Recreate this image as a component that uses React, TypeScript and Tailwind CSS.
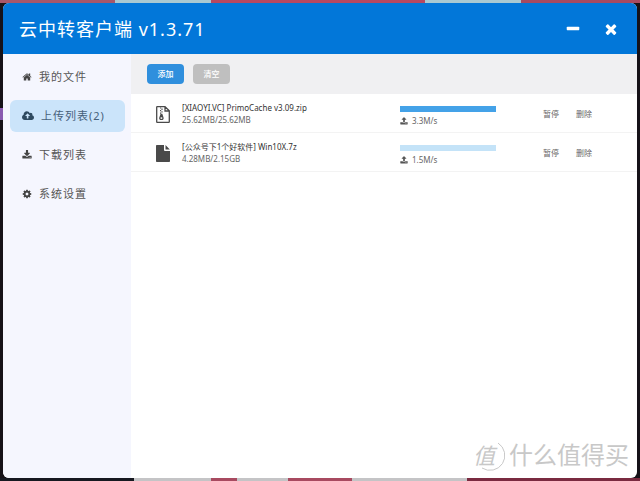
const ICONS = {
  home: 'M1472 992v480q0 26-19 45t-45 19h-384v-384h-256v384h-384q-26 0-45-19t-19-45v-480q0-1 .5-3t.5-3l575-474 575 474q1 2 1 6zm223-69l-62 74q-8 9-21 11h-3q-13 0-21-7l-692-577-692 577q-12 8-24 7-13-2-21-11l-62-74q-8-10-7-23.5t11-21.5l719-599q32-26 76-26t76 26l244 204v-195q0-14 9-23t23-9h192q14 0 23 9t9 23v408l219 182q10 8 11 21.5t-7 23.5z',
  cloud: 'M1216 864q0-14-9-23l-352-352q-9-9-23-9t-23 9l-351 351q-10 12-10 24 0 14 9 23t23 9h224v352q0 13 9.5 22.5t22.5 9.5h192q13 0 22.5-9.5t9.5-22.5v-352h224q13 0 22.5-9.5t9.5-22.5zm640 288q0 159-112.5 271.5t-271.5 112.5h-1088q-185 0-316.5-131.5t-131.5-316.5q0-130 70-240t188-165q-2-30-2-43 0-212 150-362t362-150q156 0 285.5 87t188.5 231q71-62 166-62 106 0 181 75t75 181q0 76-41 138 130 31 213.5 135.5t83.5 238.5z',
  download: 'M1344 1344q0-26-19-45t-45-19-45 19-19 45 19 45 45 19 45-19 19-45zm256 0q0-26-19-45t-45-19-45 19-19 45 19 45 45 19 45-19 19-45zm128-224v320q0 40-28 68t-68 28h-1472q-40 0-68-28t-28-68v-320q0-40 28-68t68-28h465l135 136q58 56 136 56t136-56l136-136h464q40 0 68 28t28 68zm-325-569q17 41-14 70l-448 448q-18 19-45 19t-45-19l-448-448q-31-29-14-70 17-39 59-39h256v-448q0-26 19-45t45-19h256q26 0 45 19t19 45v448h256q42 0 59 39z',
  upload: 'M1344 1472q0-26-19-45t-45-19-45 19-19 45 19 45 45 19 45-19 19-45zm256 0q0-26-19-45t-45-19-45 19-19 45 19 45 45 19 45-19 19-45zm128-224v320q0 40-28 68t-68 28h-1472q-40 0-68-28t-28-68v-320q0-40 28-68t68-28h427q21 56 70.5 92t110.5 36h256q61 0 110.5-36t70.5-92h427q40 0 68 28t28 68zm-325-648q-17 40-59 40h-256v448q0 26-19 45t-45 19h-256q-26 0-45-19t-19-45v-448h-256q-42 0-59-40-17-39 14-69l448-448q18-19 45-19t45 19l448 448q31 30 14 69z',
  cog: 'M1152 896q0-106-75-181t-181-75-181 75-75 181 75 181 181 75 181-75 75-181zm512-109v222q0 12-8 23t-20 13l-185 28q-19 54-39 91 35 50 107 138 10 12 10 25t-9 23q-27 37-99 108t-94 71q-12 0-26-9l-138-108q-44 23-91 38-16 136-29 186-7 28-36 28h-222q-14 0-24.5-8.5t-11.5-21.5l-28-184q-49-16-90-37l-141 107q-10 9-25 9-14 0-25-11-126-114-165-168-7-10-7-23 0-12 8-23 15-21 51-66.5t54-70.5q-27-50-41-99l-183-27q-13-2-21-12.5t-8-23.5v-222q0-12 8-23t19-13l186-28q14-46 39-92-40-57-107-138-10-12-10-24 0-10 9-23 26-36 98.5-107.5t94.5-71.5q13 0 26 10l138 107q44-23 91-38 16-136 29-186 7-28 36-28h222q14 0 24.5 8.5t11.5 21.5l28 184q49 16 90 37l142-107q9-9 24-9 13 0 25 10 129 119 165 170 7 8 7 22 0 12-8 23-15 21-51 66.5t-54 70.5q26 50 41 98l183 28q13 2 21 12.5t8 23.5z',
  minus: 'M1600 736v192q0 40-28 68t-68 28h-1216q-40 0-68-28t-28-68v-192q0-40 28-68t68-28h1216q40 0 68 28t28 68z',
  times: 'M1490 1322q0 40-28 68l-136 136q-28 28-68 28t-68-28l-294-294-294 294q-28 28-68 28t-68-28l-136-136q-28-28-28-68t28-68l294-294-294-294q-28-28-28-68t28-68l136-136q28-28 68-28t68 28l294 294 294-294q28-28 68-28t68 28l136 136q28 28 28 68t-28 68l-294 294 294 294q28 28 28 68z',
};

type IconName = keyof typeof ICONS;

function Icon({ name, className }: { name: IconName; className: string }) {
  return (
    <svg viewBox={name === 'cloud' ? '-64 0 1920 1792' : '0 0 1792 1792'} fill="currentColor" className={className} aria-hidden>
      <path d={ICONS[name]} />
    </svg>
  );
}

function ZipIcon() {
  return (
    <svg viewBox="0 0 14 17" fill="none" stroke="currentColor" className="h-[17px] w-3.5 text-[#4a4a4a]" aria-hidden>
      <path strokeWidth="1.3" d="M1.2.7H9l4.300 4v11q0 .6-.6.6H1.2q-.5 0-.5-.6V1.2q0-.5.5-.5zM9 .8V5h4" />
      <path strokeWidth="1.1" d="M4.6 1.4v1.2M6 2.6v1.3M4.6 3.9v1.3M6 5.2v1.3M4.6 6.5v1.3" />
      <path fill="currentColor" stroke="none" fillRule="evenodd" d="M4.6 7.800h1.700l1.300 3.900q.4 2.300-2.200 2.300t-2.200-2.300zM5.400 11.300q-1.100 0-1.100.8t1.100.8 1.100-.8-1.100-.8z" />
    </svg>
  );
}

function FileIcon() {
  return (
    <svg viewBox="0 0 14 17" fill="currentColor" className="h-[17px] w-3.5 text-[#4a4a4a]" aria-hidden>
      <path d="M.8 0H8v5q0 1 1 1h5v10.200q0 .8-.8.8H.8q-.8 0-.8-.8V.8Q0 0 .8 0zM9.500 0l4.300 4.500H9.500z" />
    </svg>
  );
}

const NAV: { label: string; icon: IconName; active?: boolean }[] = [
  { label: '我的文件', icon: 'home' },
  { label: '上传列表(2)', icon: 'cloud', active: true },
  { label: '下载列表', icon: 'download' },
  { label: '系统设置', icon: 'cog' },
];

const UPLOADS = [
  { name: '[XIAOYI.VC] PrimoCache v3.09.zip', size: '25.62MB/25.62MB', speed: '3.3M/s', zip: true },
  { name: '[公众号下1个好软件] Win10X.7z', size: '4.28MB/2.15GB', speed: '1.5M/s', zip: false },
];

function TitleBar() {
  return (
    <header className="flex h-[51px] shrink-0 items-center bg-[#0277d9] pl-4 pr-[18px] text-white">
      <h1 className="flex-1 text-lg tracking-[1px]">云中转客户端 v1.3.71</h1>
      <div className="flex gap-[22px]">
        <button aria-label="最小化">
          <Icon name="minus" className="size-4" />
        </button>
        <button aria-label="关闭">
          <Icon name="times" className="size-4" />
        </button>
      </div>
    </header>
  );
}

function Sidebar() {
  return (
    <nav className="flex w-32 shrink-0 flex-col gap-[7px] bg-[#f5f6fe] pl-[7px] pr-1.5 pt-[7px]">
      {NAV.map((item) => (
        <a
          key={item.label}
          href="#"
          className={`flex h-8 items-center gap-[7px] rounded-md pl-3 text-[11px] tracking-[1px] ${
            item.active ? 'bg-[#cbe4fa] text-[#46617a]' : 'text-[#555]'
          }`}
        >
          <Icon name={item.icon} className={item.active ? 'size-3 text-[#2f4a60]' : 'size-[10px] text-[#444]'} />
          {item.label}
        </a>
      ))}
    </nav>
  );
}

function Watermark() {
  return (
    <div className="absolute bottom-[7px] right-2 flex items-center gap-1 text-[#c8c8c8]">
      <span className="relative flex size-8 items-center justify-start text-[22px]">
        <svg viewBox="0 0 32 32" fill="none" stroke="currentColor" className="absolute inset-0" aria-hidden>
          <path d="M25 4A14 14 0 0 1 9 29" />
        </svg>
        <i>值</i>
      </span>
      <span className="text-2xl">什么值得买</span>
    </div>
  );
}

export default function App() {
  return (
    <div className="relative flex h-screen flex-col bg-[#161218] font-['Noto_Sans','Noto_Sans_CJK_SC',sans-serif]">
      {/* desktop showing around the window */}
      <div className="absolute left-0 top-[108px] h-3 w-[3px] bg-[#8a5ab0]" />
      <div className="flex h-[3px] shrink-0">
        <div className="w-[18%] bg-[#a8576a]" />
        <div className="w-[15%] bg-[#a9c9d2]" />
        <div className="w-1/3 bg-[#b84860]" />
        <div className="w-[15%] bg-[#a9c9d2]" />
        <div className="flex-1 bg-[#a84a60]" />
      </div>
      <div className="relative mx-[3px] flex flex-1 flex-col overflow-hidden rounded-md bg-white">
        <TitleBar />
        <div className="flex flex-1">
          <Sidebar />
          <main className="flex-1">
            <div className="flex h-10 items-center gap-[9px] bg-[#f0f0f2] pl-4">
              <button className="h-5 w-[37px] rounded bg-[#2f8fdd] text-[8px] font-medium text-white">添加</button>
              <button className="h-5 w-[37px] rounded bg-[#bfbfbf] text-[8px] font-medium text-white">清空</button>
            </div>
            <ul>
              {UPLOADS.map((file) => (
                <li key={file.name} className="flex h-[39px] items-center border-b border-[#f3f3f3] pl-[25px] pt-0.5 text-[8px] text-[#666]">
                  {file.zip ? <ZipIcon /> : <FileIcon />}
                  <div className="ml-3 flex-1">
                    <p className="h-3 leading-3 text-[#333]">{file.name}</p>
                    <p className="h-3 leading-3">{file.size}</p>
                  </div>
                  <div className="w-24 pt-1">
                    <div className={file.zip ? 'mb-[3px] h-1.5 bg-[#44a2e8]' : 'mb-[3px] h-1.5 bg-[#c4e3f8]'} />
                    <div className="flex h-3 items-center gap-1 leading-3">
                      <Icon name="upload" className="size-2 text-[#555]" />
                      {file.speed}
                    </div>
                  </div>
                  <div className="ml-[47px] mr-[45px] flex gap-[17px]">
                    <button>暂停</button>
                    <button>删除</button>
                  </div>
                </li>
              ))}
            </ul>
          </main>
        </div>
        <Watermark />
      </div>
      <div className="flex h-[3px] shrink-0">
        <div className="w-[21%] bg-[#161820]" />
        <div className="w-[12%] bg-[#c4c4c6]" />
        <div className="w-[4%] bg-[#a84a60]" />
        <div className="w-[8%] bg-[#c4c4c6]" />
        <div className="w-[10%] bg-[#a84a60]" />
        <div className="w-[18%] bg-[#c4c4c6]" />
        <div className="flex-1 bg-[#7a2a40]" />
      </div>
    </div>
  );
}
